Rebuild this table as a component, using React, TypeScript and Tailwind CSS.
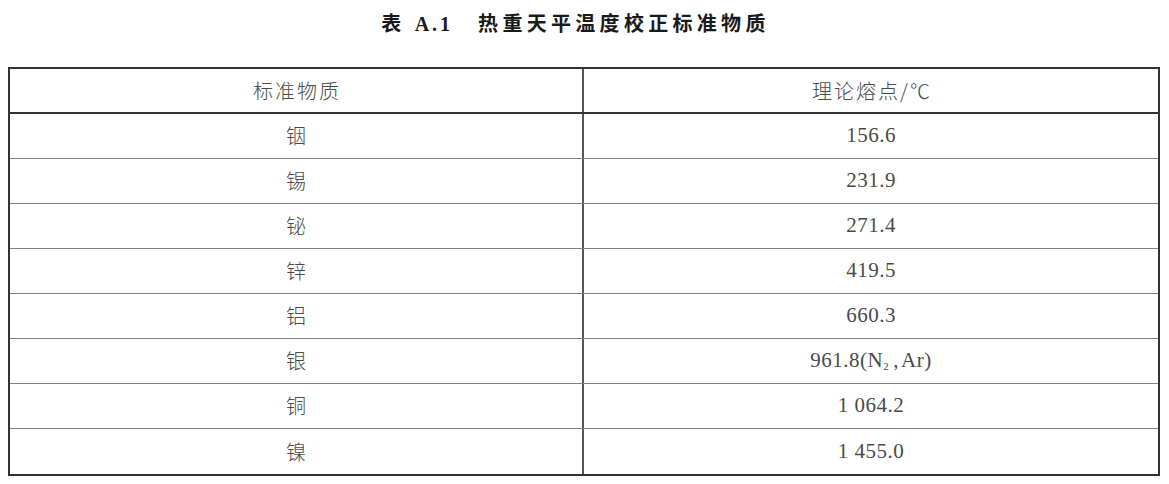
import React from "react";

const rows: { name: string; value: React.ReactNode }[] = [
  { name: "铟", value: "156.6" },
  { name: "锡", value: "231.9" },
  { name: "铋", value: "271.4" },
  { name: "锌", value: "419.5" },
  { name: "铝", value: "660.3" },
  {
    name: "银",
    value: (
      <>
        961.8(N<sub className="text-[11px] align-baseline relative top-[3px]">2</sub>
        <span className="ml-[4px] mr-[2px]">,</span>Ar)
      </>
    ),
  },
  { name: "铜", value: "1 064.2" },
  { name: "镍", value: "1 455.0" },
];

const cjk = "font-['Noto_Sans_CJK_SC',sans-serif]";
const serif = "font-['Liberation_Serif','Noto_Sans_CJK_SC',serif]";

const App: React.FC = () => {
  return (
    <div className="w-[1169px] h-[484px] bg-white overflow-hidden">
      <div className="h-[67px] pt-[8px] flex justify-center pr-[18px]">
        <h1 className={`${cjk} text-[20px] font-bold text-[#1a1a1a] tracking-[4.3px] leading-[30px] whitespace-nowrap`}>
          <span>表</span>
          <span className={`${serif} ml-[9px] tracking-[3px] text-[20px]`}>A.1</span>
          <span className="ml-[25px]">热重天平温度校正标准物质</span>
        </h1>
      </div>
      <div className="ml-[8px] w-[1152px] border-2 border-[#333]">
        <div className="grid grid-cols-[574px_1fr] h-[45px] border-b-2 border-[#333]">
          <div className={`${cjk} flex items-center justify-center border-r-2 border-[#555] text-[20px] font-light text-[#4a4a4a] tracking-[2px] pl-[2px]`}>
            标准物质
          </div>
          <div className={`${cjk} flex items-center justify-center text-[20px] font-light text-[#4a4a4a] tracking-[2px] pl-[2px]`}>
            理论熔点/℃
          </div>
        </div>
        {rows.map((r, idx) => (
          <div
            key={idx}
            className={`grid grid-cols-[574px_1fr] h-[45px] ${idx < rows.length - 1 ? "border-b border-[#808080]" : ""}`}
          >
            <div className={`${cjk} flex items-center justify-center border-r-2 border-[#555] text-[20px] font-light text-[#4a4a4a]`}>
              {r.name}
            </div>
            <div className={`${serif} flex items-center justify-center text-[21px] text-[#4a4a4a] tracking-[0.5px]`}>
              <span>{r.value}</span>
            </div>
          </div>
        ))}
      </div>
    </div>
  );
};

export default App;
